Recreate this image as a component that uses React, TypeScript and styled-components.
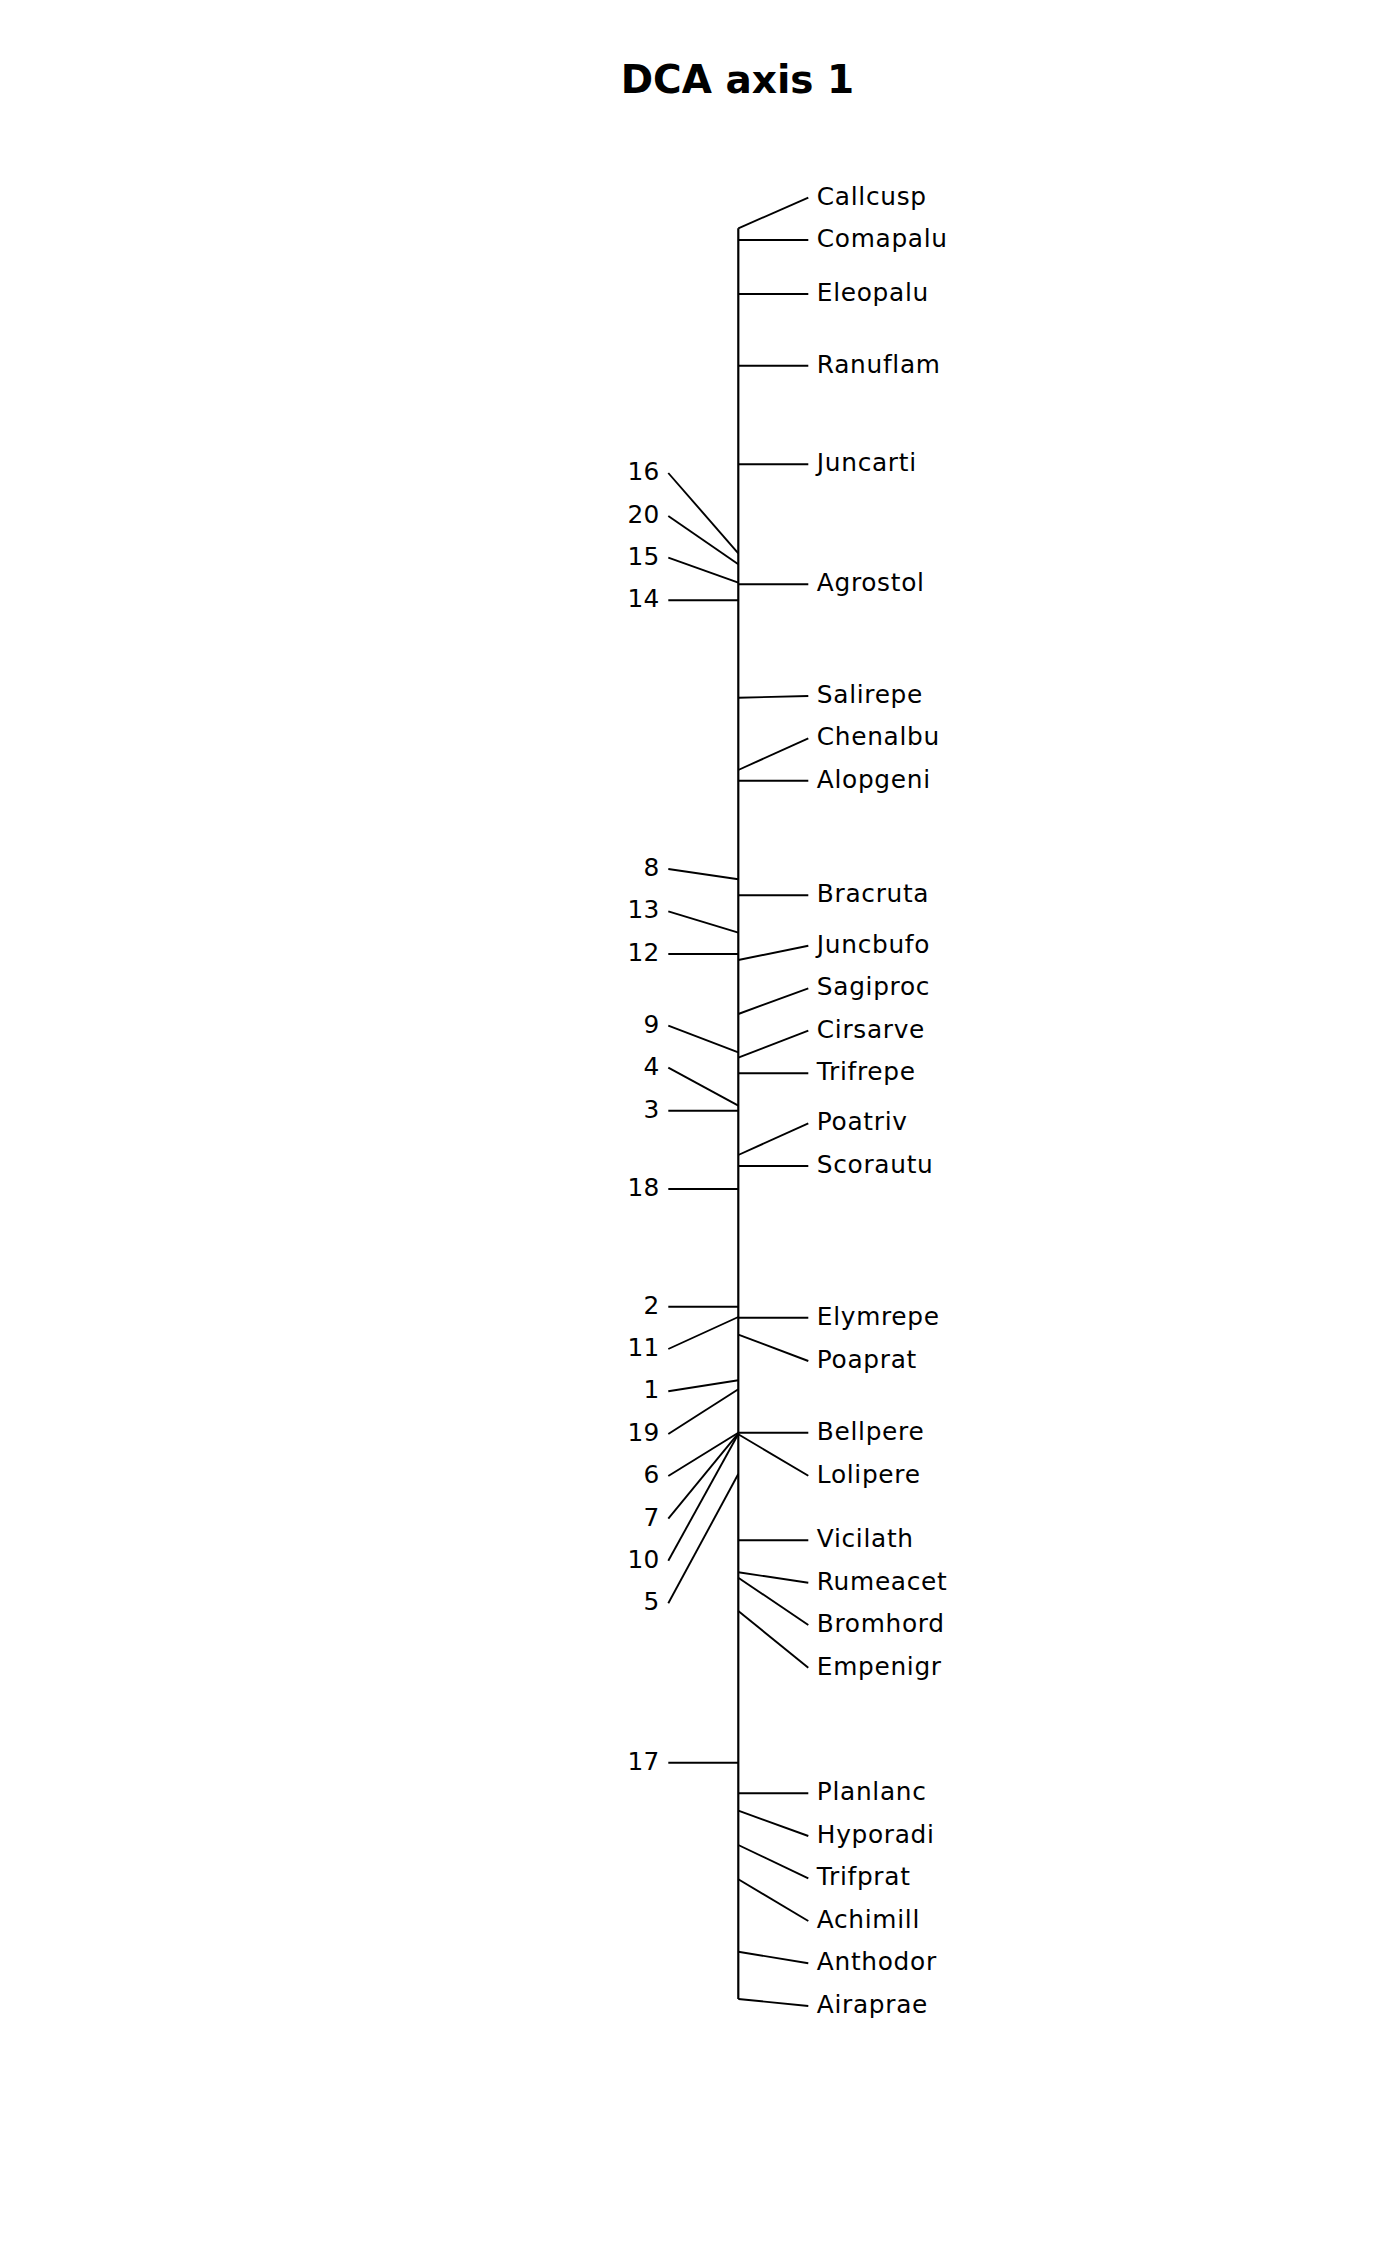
import * as React from 'react';
import styled, { createGlobalStyle } from 'styled-components';

// y values are page pixels: [label, y on axis, y of the label]
const species: [string, number, number][] = [
  ['Callcusp', 228.3, 197.7],
  ['Comapalu', 240, 240],
  ['Eleopalu', 294, 294],
  ['Ranuflam', 365.7, 365.7],
  ['Juncarti', 464.3, 464.3],
  ['Agrostol', 584.3, 584.3],
  ['Salirepe', 697.7, 696],
  ['Chenalbu', 770, 738.3],
  ['Alopgeni', 780.7, 780.7],
  ['Bracruta', 895.3, 895.3],
  ['Juncbufo', 960, 945.7],
  ['Sagiproc', 1014, 988.3],
  ['Cirsarve', 1057.7, 1030.7],
  ['Trifrepe', 1073.3, 1073.3],
  ['Poatriv', 1155, 1123.3],
  ['Scorautu', 1166, 1166],
  ['Elymrepe', 1317.7, 1317.7],
  ['Poaprat', 1334.7, 1361],
  ['Bellpere', 1432.7, 1432.7],
  ['Lolipere', 1434.3, 1475.7],
  ['Vicilath', 1540.3, 1540.3],
  ['Rumeacet', 1572.3, 1582.7],
  ['Bromhord', 1577.7, 1625],
  ['Empenigr', 1611, 1667.7],
  ['Planlanc', 1793.3, 1793.3],
  ['Hyporadi', 1810.7, 1836],
  ['Trifprat', 1845, 1878.3],
  ['Achimill', 1879.3, 1921],
  ['Anthodor', 1951.7, 1963.3],
  ['Airaprae', 1999, 2006],
];

const sites: [string, number, number][] = [
  ['16', 553.3, 473],
  ['20', 564.3, 516],
  ['15', 582.7, 557.7],
  ['14', 600.3, 600.3],
  ['8', 879.3, 869],
  ['13', 932.7, 911.3],
  ['12', 954, 954],
  ['9', 1052.3, 1025.7],
  ['4', 1105.7, 1067.7],
  ['3', 1110.7, 1110.7],
  ['18', 1189, 1189],
  ['2', 1306.7, 1306.7],
  ['11', 1317, 1349],
  ['1', 1380.3, 1391.3],
  ['19', 1389.3, 1434],
  ['6', 1432.7, 1476],
  ['7', 1433.3, 1518.7],
  ['10', 1434, 1560.7],
  ['5', 1474, 1603.3],
  ['17', 1762.7, 1762.7],
];

const AXIS_X = 738.3;
const TICK = 70;
const LABEL_GAP = 8.5;
const TOP = 99;

export default function App() {
  return (
    <>
      <GlobalStyle />
      <Figure>
        <Title>DCA axis 1</Title>
        <Chart viewBox={`0 ${TOP} 1400 ${2266 - TOP}`}>
          <Axis x1={AXIS_X} y1={228.3} x2={AXIS_X} y2={1999} />
          {species.map(([name, ay, ly]) => (
            <g key={name}>
              <Tick x1={AXIS_X} y1={ay} x2={AXIS_X + TICK} y2={ly} />
              <Label x={AXIS_X + TICK + LABEL_GAP} y={ly + 7}>
                {name}
              </Label>
            </g>
          ))}
          {sites.map(([name, ay, ly]) => (
            <g key={name}>
              <Tick x1={AXIS_X - TICK} y1={ly} x2={AXIS_X} y2={ay} />
              <Label $end x={AXIS_X - TICK - LABEL_GAP} y={ly + 7} textAnchor="end">
                {name}
              </Label>
            </g>
          ))}
        </Chart>
      </Figure>
    </>
  );
}

const GlobalStyle = createGlobalStyle`
  body {
    margin: 0;
    background: #ffffff;
    font-family: "DejaVu Sans", "Liberation Sans", sans-serif;
  }
`;

const Figure = styled.div`
  width: 1400px;
  height: 2266px;
  display: flex;
  flex-direction: column;
  background: #ffffff;
`;

const Title = styled.h1`
  margin: 0;
  padding: 60px 0 0 75px;
  height: 39px;
  line-height: 39px;
  font-size: 39px;
  font-weight: bold;
  text-align: center;
  color: #000000;
  font-family: "DejaVu Sans", sans-serif;
`;

const Chart = styled.svg`
  display: block;
  width: 1400px;
  height: ${2266 - TOP}px;
`;

const Axis = styled.line`
  stroke: #000000;
  stroke-width: 2.2;
`;

const Tick = styled.line`
  stroke: #000000;
  stroke-width: 1.9;
`;

const Label = styled.text<{ $end?: boolean }>`
  font-family: "DejaVu Sans", sans-serif;
  font-size: 24.8px;
  letter-spacing: ${(p) => (p.$end ? '0.4px' : '0.7px')};
  fill: #000000;
`;
